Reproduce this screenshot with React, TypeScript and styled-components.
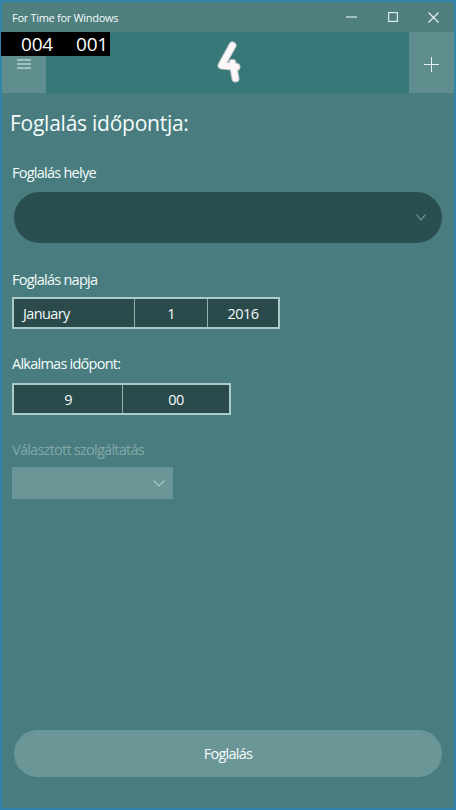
import { createGlobalStyle } from "styled-components";
import styled from "styled-components";

const GlobalStyle = createGlobalStyle`
  html, body {
    margin: 0;
    padding: 0;
    background: #2f83ad;
  }
  * {
    box-sizing: border-box;
  }
`;

const Window = styled.div`
  position: relative;
  width: 456px;
  height: 810px;
  padding: 2px;
  background: #2f83ad;
  font-family: "Open Sans", "Noto Sans", sans-serif;
  color: #f4fbfa;
  display: flex;
  flex-direction: column;
`;

const TitleBar = styled.div`
  height: 30px;
  flex: none;
  background: #4f7f7e;
  display: flex;
  align-items: center;
  justify-content: space-between;
  padding-left: 10px;
`;

const TitleText = styled.span`
  font-size: 11px;
  letter-spacing: -0.3px;
`;

const WindowControls = styled.div`
  display: flex;
  height: 100%;
`;

const ControlButton = styled.div`
  width: 41px;
  height: 100%;
  display: flex;
  align-items: center;
  justify-content: center;
`;

const Page = styled.div`
  flex: 1;
  background: #487c7e;
  display: flex;
  flex-direction: column;
`;

const TopBar = styled.div`
  height: 61px;
  flex: none;
  background: #367878;
  display: flex;
  justify-content: space-between;
`;

const BarButton = styled.div<{ $width: number }>`
  width: ${(p) => p.$width}px;
  padding-top: 3px;
  background: #5f8d8d;
  display: flex;
  align-items: center;
  justify-content: center;
`;

const Logo = styled.svg`
  align-self: center;
`;

const Counter = styled.div`
  position: absolute;
  left: 1px;
  top: 32px;
  width: 109px;
  height: 24px;
  background: #000;
  color: #fff;
  font-size: 19px;
  letter-spacing: -0.2px;
  display: flex;
  align-items: center;
  padding-left: 20px;
  gap: 23px;
`;

const Content = styled.div`
  flex: 1;
  display: flex;
  flex-direction: column;
  padding: 0 10px;
`;

const Heading = styled.h1`
  margin: 15px 0 0 -2px;
  font-size: 21px;
  font-weight: 400;
  line-height: 30px;
  letter-spacing: -0.25px;
`;

const Label = styled.div<{ $disabled?: boolean; $top: number }>`
  margin-top: ${(p) => p.$top}px;
  font-size: 14.5px;
  line-height: 20px;
  letter-spacing: -0.75px;
  color: ${(p) => (p.$disabled ? "#84a8a8" : "#f4fbfa")};
`;

const PillSelect = styled.div`
  margin: 9px 2px 0 2px;
  height: 51px;
  border-radius: 26px;
  background: #2b4f51;
  display: flex;
  align-items: center;
  justify-content: flex-end;
  padding-right: 16px;
`;

const Picker = styled.div<{ $columns: string; $width: number; $top: number }>`
  margin-top: ${(p) => p.$top}px;
  width: ${(p) => p.$width}px;
  height: 32px;
  display: grid;
  grid-template-columns: ${(p) => p.$columns};
  background: #2b4a4c;
  border: 2px solid #a9cbc9;
`;

const PickerCell = styled.div<{ $left?: boolean }>`
  display: flex;
  align-items: center;
  justify-content: ${(p) => (p.$left ? "flex-start" : "center")};
  padding-left: ${(p) => (p.$left ? "9px" : "0")};
  font-size: 14.5px;
  letter-spacing: -0.6px;
  & + & {
    border-left: 1px solid #8fb0af;
  }
`;

const DisabledSelect = styled.div`
  margin-top: 7px;
  width: 161px;
  height: 32px;
  background: #6b9697;
  display: flex;
  align-items: center;
  justify-content: flex-end;
  padding-right: 8px;
`;

const SubmitButton = styled.div`
  margin: auto 2px 31px 2px;
  height: 47px;
  border-radius: 24px;
  background: #6b9697;
  display: flex;
  align-items: center;
  justify-content: center;
  font-size: 14.5px;
  letter-spacing: -0.75px;
`;

const Chevron = ({ color, width }: { color: string; width: number }) => (
  <svg width={width} height="7" viewBox="0 0 12 7" preserveAspectRatio="none">
    <path d="M0.5 0.5 L6 6 L11.5 0.5" fill="none" stroke={color} strokeWidth="1.2" />
  </svg>
);

const logoPath = "M18.5 4.5 L7.5 24.5 L22.5 26 M18.5 22 L21.5 37.5";

export default function App() {
  return (
    <>
      <GlobalStyle />
      <Window>
        <TitleBar>
          <TitleText>For Time for Windows</TitleText>
          <WindowControls>
            <ControlButton>
              <svg width="11" height="2" viewBox="0 0 11 2">
                <path d="M0 1 H11" stroke="#d9ecea" strokeWidth="1.2" />
              </svg>
            </ControlButton>
            <ControlButton>
              <svg width="10" height="10" viewBox="0 0 10 10">
                <rect x="0.6" y="0.6" width="8.8" height="8.8" fill="none" stroke="#d9ecea" strokeWidth="1.2" />
              </svg>
            </ControlButton>
            <ControlButton>
              <svg width="11" height="11" viewBox="0 0 11 11">
                <path d="M0.5 0.5 L10.5 10.5 M10.5 0.5 L0.5 10.5" stroke="#e6f3f1" strokeWidth="1.2" />
              </svg>
            </ControlButton>
          </WindowControls>
        </TitleBar>
        <Page>
          <TopBar>
            <BarButton $width={44}>
              <svg width="14" height="10" viewBox="0 0 14 10">
                <path d="M0 1 H14 M0 5 H14 M0 9 H14" stroke="#e6f3f1" strokeWidth="1" />
              </svg>
            </BarButton>
            <Logo width="28" height="44" viewBox="0 0 28 44">
              <path d={logoPath} fill="none" stroke="#b9c4c6" strokeWidth="8" strokeLinecap="round" strokeLinejoin="round" />
              <path d={logoPath} fill="none" stroke="#fbf7f8" strokeWidth="6" strokeLinecap="round" strokeLinejoin="round" />
            </Logo>
            <BarButton $width={45}>
              <svg width="15" height="15" viewBox="0 0 15 15">
                <path d="M7.5 0 V15 M0 7.5 H15" stroke="#e6f3f1" strokeWidth="1" />
              </svg>
            </BarButton>
          </TopBar>
          <Content>
            <Heading>Foglalás időpontja:</Heading>
            <Label $top={25}>Foglalás helye</Label>
            <PillSelect>
              <Chevron color="#6f9796" width={10} />
            </PillSelect>
            <Label $top={27}>Foglalás napja</Label>
            <Picker $top={7} $width={268} $columns="120px 73px 1fr">
              <PickerCell $left>January</PickerCell>
              <PickerCell>1</PickerCell>
              <PickerCell>2016</PickerCell>
            </Picker>
            <Label $top={25}>Alkalmas időpont:</Label>
            <Picker $top={9} $width={219} $columns="108px 1fr">
              <PickerCell>9</PickerCell>
              <PickerCell>00</PickerCell>
            </Picker>
            <Label $disabled $top={25}>Választott szolgáltatás</Label>
            <DisabledSelect>
              <Chevron color="#a9c6c5" width={12} />
            </DisabledSelect>
            <SubmitButton>Foglalás</SubmitButton>
          </Content>
        </Page>
        <Counter>
          <span>004</span>
          <span>001</span>
        </Counter>
      </Window>
    </>
  );
}
